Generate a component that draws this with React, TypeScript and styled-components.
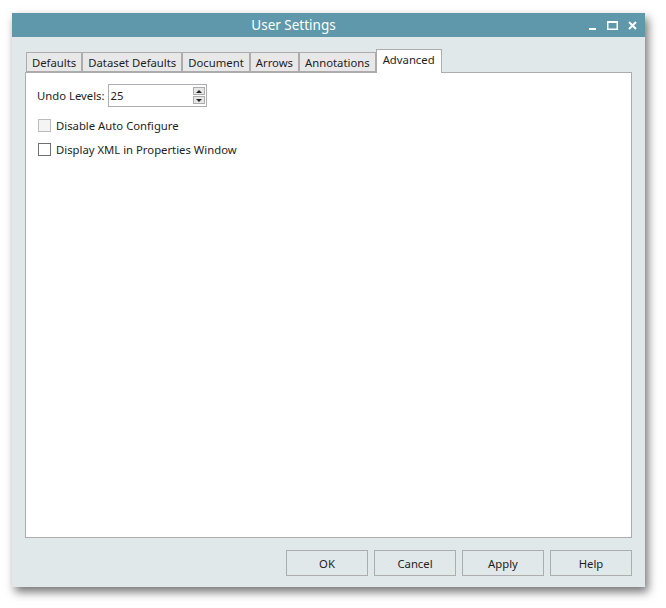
import React, { useState } from "react";
import styled, { createGlobalStyle } from "styled-components";

const GlobalStyle = createGlobalStyle`
  html, body {
    margin: 0;
    padding: 0;
    background: #ffffff;
  }
  body {
    font-family: "Noto Sans", "Open Sans", sans-serif;
    font-size: 11.3px;
    color: #1e1e1e;
  }
`;

const Page = styled.div`
  padding: 13px 0 0 12px;
  width: 666px;
  height: 608px;
  box-sizing: border-box;
`;

const Window = styled.div`
  width: 633px;
  height: 574px;
  display: flex;
  flex-direction: column;
  background: #e1e8ea;
  box-shadow: 3px 5px 9px rgba(0, 0, 0, 0.55);
`;

const TitleBar = styled.div`
  height: 24px;
  background: #5f98aa;
  display: flex;
  align-items: center;
  position: relative;
`;

const Title = styled.div`
  flex: 1;
  text-align: center;
  padding-right: 70px;
  color: #ffffff;
  font-size: 13.5px;
  line-height: 24px;
`;

const Controls = styled.div`
  position: absolute;
  right: 8px;
  top: 0;
  height: 24px;
  display: flex;
  align-items: center;
  gap: 10px;
`;

const Body = styled.div`
  flex: 1;
  display: flex;
  flex-direction: column;
  padding: 12px 13px 11px 13px;
`;

const TabStrip = styled.div`
  display: flex;
  align-items: flex-end;
  height: 23px;
  padding-left: 1px;
  position: relative;
  z-index: 1;
`;

const Tab = styled.div<{ $active?: boolean }>`
  box-sizing: border-box;
  height: ${(p) => (p.$active ? "24px" : "20px")};
  padding: ${(p) => (p.$active ? "0 6px 4px" : "0 5px")};
  margin-bottom: ${(p) => (p.$active ? "-1px" : "0")};
  display: flex;
  align-items: center;
  background: ${(p) => (p.$active ? "#ffffff" : "#e8e8e8")};
  border: 1px solid #acacac;
  border-bottom: ${(p) => (p.$active ? "none" : "1px solid #acacac")};
  white-space: nowrap;
  color: #1e1e1e;
`;

const Panel = styled.div`
  flex: 1;
  background: #ffffff;
  border: 1px solid #acacac;
  padding: 11px 10px 10px 11px;
  display: flex;
  flex-direction: column;
`;

const FieldRow = styled.div`
  display: flex;
  align-items: center;
  gap: 3px;
  height: 23px;
  margin-bottom: 10px;
`;

const SpinBox = styled.div`
  width: 99px;
  height: 23px;
  box-sizing: border-box;
  border: 1px solid #abadb3;
  display: flex;
  align-items: center;
  justify-content: space-between;
  padding: 0 1px 0 2px;
  background: #fff;
`;

const SpinButtons = styled.div`
  display: flex;
  flex-direction: column;
  gap: 1px;
`;

const SpinButton = styled.div`
  width: 12px;
  height: 8px;
  box-sizing: border-box;
  background: #e6e6e6;
  border: 1px solid #adadad;
  display: flex;
  align-items: center;
  justify-content: center;
`;

const CheckRow = styled.label`
  display: flex;
  align-items: center;
  gap: 5px;
  height: 16px;
  margin-bottom: 8px;
  padding-left: 1px;
`;

const Box = styled.span<{ $disabled?: boolean }>`
  width: 13px;
  height: 13px;
  box-sizing: border-box;
  border: 1px solid ${(p) => (p.$disabled ? "#bcbcbc" : "#707070")};
  background: ${(p) => (p.$disabled ? "#f4f4f4" : "#fff")};
  display: inline-block;
`;

const Footer = styled.div`
  display: flex;
  justify-content: flex-end;
  gap: 6px;
  padding-top: 12px;
`;

const Button = styled.button`
  width: 82px;
  height: 26px;
  box-sizing: border-box;
  background: #e1e8ea;
  border: 1px solid #adadad;
  font-family: inherit;
  font-size: 11.3px;
  color: #1e1e1e;
  padding: 0;
`;

const tabs = [
  "Defaults",
  "Dataset Defaults",
  "Document",
  "Arrows",
  "Annotations",
  "Advanced",
];

export default function App() {
  const [active, setActive] = useState("Advanced");
  const [levels] = useState("25");
  return (
    <>
      <GlobalStyle />
      <Page>
        <Window>
          <TitleBar>
            <Title>User Settings</Title>
            <Controls>
              <svg width="8" height="12" viewBox="0 0 8 12">
                <rect x="0" y="9" width="7" height="2" fill="#fff" />
              </svg>
              <svg width="11" height="9" viewBox="0 0 11 9">
                <rect x="0.75" y="0.75" width="9.5" height="7.5" fill="none" stroke="#fff" strokeWidth="1.5" />
                <rect x="0" y="0" width="11" height="2" fill="#fff" />
              </svg>
              <svg width="9" height="9" viewBox="0 0 9 9">
                <path d="M1 1 L8 8 M8 1 L1 8" stroke="#fff" strokeWidth="2" />
              </svg>
            </Controls>
          </TitleBar>
          <Body>
            <TabStrip>
              {tabs.map((t) => (
                <Tab key={t} $active={t === active} onClick={() => setActive(t)}>
                  {t}
                </Tab>
              ))}
            </TabStrip>
            <Panel>
              <FieldRow>
                <span>Undo Levels:</span>
                <SpinBox>
                  <span>{levels}</span>
                  <SpinButtons>
                    <SpinButton>
                      <svg width="6" height="3" viewBox="0 0 6 3">
                        <path d="M0 3 L3 0 L6 3 Z" fill="#222" />
                      </svg>
                    </SpinButton>
                    <SpinButton>
                      <svg width="6" height="3" viewBox="0 0 6 3">
                        <path d="M0 0 L6 0 L3 3 Z" fill="#222" />
                      </svg>
                    </SpinButton>
                  </SpinButtons>
                </SpinBox>
              </FieldRow>
              <CheckRow>
                <Box $disabled />
                <span>Disable Auto Configure</span>
              </CheckRow>
              <CheckRow>
                <Box />
                <span>Display XML in Properties Window</span>
              </CheckRow>
            </Panel>
            <Footer>
              <Button>OK</Button>
              <Button>Cancel</Button>
              <Button>Apply</Button>
              <Button>Help</Button>
            </Footer>
          </Body>
        </Window>
      </Page>
    </>
  );
}
